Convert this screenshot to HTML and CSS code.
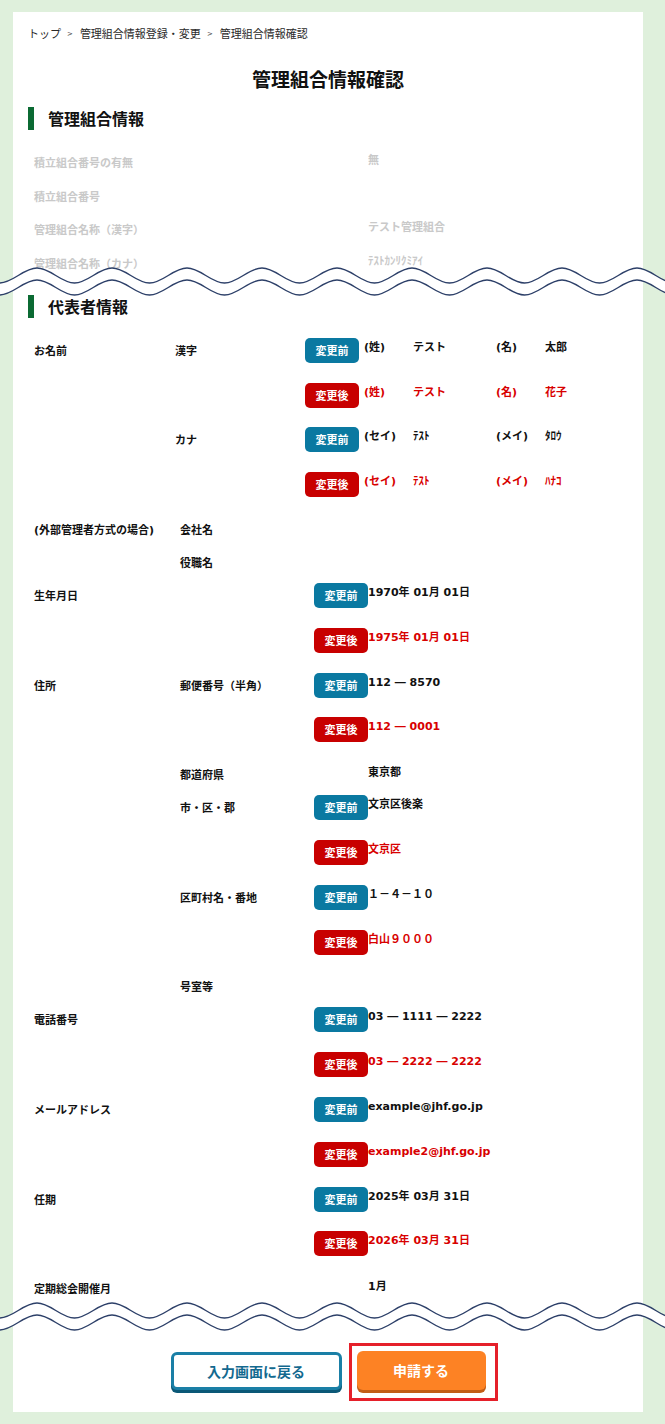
FILE: index.html
```html
<!DOCTYPE html>
<html lang="ja">
<head>
<meta charset="utf-8">
<title>管理組合情報確認</title>
<link rel="stylesheet" href="styles.css">
</head>
<body>
<div class="page">
  <div class="card">
    <nav class="crumb"><span>トップ</span><span class="sep">&gt;</span><span>管理組合情報登録・変更</span><span class="sep">&gt;</span><span>管理組合情報確認</span></nav>
    <h1 class="title">管理組合情報確認</h1>
    <h2 class="sec">管理組合情報</h2>
    <div class="faded">
      <div class="frow"><div class="flb">積立組合番号の有無</div><div class="v">無</div></div>
      <div class="frow"><div class="flb">積立組合番号</div><div class="v"></div></div>
      <div class="frow"><div class="flb">管理組合名称（漢字）</div><div class="v">テスト管理組合</div></div>
      <div class="frow"><div class="flb">管理組合名称（カナ）</div><div class="v">ﾃｽﾄｶﾝﾘｸﾐｱｲ</div></div>
    </div>
    <div class="wave">
      <svg width="665" height="30" viewBox="0 0 665 30">
        <path class="band" d="M-38 1 C-24.5 1 -14 16 -0.5 16 S23.5 1 37 1 S61 16 74.5 16 S98.5 1 112 1 S136 16 149.5 16 S173.5 1 187 1 S211 16 224.5 16 S248.5 1 262 1 S286 16 299.5 16 S323.5 1 337 1 S361 16 374.5 16 S398.5 1 412 1 S436 16 449.5 16 S473.5 1 487 1 S511 16 524.5 16 S548.5 1 562 1 S586 16 599.5 16 S623.5 1 637 1 S661 16 674.5 16 S698.5 1 712 1 L712 13 C698.5 13 688 28 674.5 28 S650.5 13 637 13 S613 28 599.5 28 S575.5 13 562 13 S538 28 524.5 28 S500.5 13 487 13 S463 28 449.5 28 S425.5 13 412 13 S388 28 374.5 28 S350.5 13 337 13 S313 28 299.5 28 S275.5 13 262 13 S238 28 224.5 28 S200.5 13 187 13 S163 28 149.5 28 S125.5 13 112 13 S88 28 74.5 28 S50.5 13 37 13 S13 28 -0.5 28 S-24.5 13 -38 13 Z"/>
        <path class="line" d="M-38 1 C-24.5 1 -14 16 -0.5 16 S23.5 1 37 1 S61 16 74.5 16 S98.5 1 112 1 S136 16 149.5 16 S173.5 1 187 1 S211 16 224.5 16 S248.5 1 262 1 S286 16 299.5 16 S323.5 1 337 1 S361 16 374.5 16 S398.5 1 412 1 S436 16 449.5 16 S473.5 1 487 1 S511 16 524.5 16 S548.5 1 562 1 S586 16 599.5 16 S623.5 1 637 1 S661 16 674.5 16 S698.5 1 712 1"/>
        <path class="line" transform="translate(0 12)" d="M-38 1 C-24.5 1 -14 16 -0.5 16 S23.5 1 37 1 S61 16 74.5 16 S98.5 1 112 1 S136 16 149.5 16 S173.5 1 187 1 S211 16 224.5 16 S248.5 1 262 1 S286 16 299.5 16 S323.5 1 337 1 S361 16 374.5 16 S398.5 1 412 1 S436 16 449.5 16 S473.5 1 487 1 S511 16 524.5 16 S548.5 1 562 1 S586 16 599.5 16 S623.5 1 637 1 S661 16 674.5 16 S698.5 1 712 1"/>
      </svg>
    </div>
    <h2 class="sec sec2">代表者情報</h2>

    <div class="names">
      <div class="nl"><div class="lb">お名前</div><div class="lb">漢字</div><div><div class="badge before">変更前</div></div><div class="v">(姓)</div><div class="v">テスト</div><div class="v">(名)</div><div class="v">太郎</div></div>
      <div class="nl red"><div></div><div></div><div><div class="badge after">変更後</div></div><div class="v">(姓)</div><div class="v">テスト</div><div class="v">(名)</div><div class="v">花子</div></div>
      <div class="nl"><div></div><div class="lb">カナ</div><div><div class="badge before">変更前</div></div><div class="v">(セイ)</div><div class="v">ﾃｽﾄ</div><div class="v">(メイ)</div><div class="v">ﾀﾛｳ</div></div>
      <div class="nl red"><div></div><div></div><div><div class="badge after">変更後</div></div><div class="v">(セイ)</div><div class="v">ﾃｽﾄ</div><div class="v">(メイ)</div><div class="v">ﾊﾅｺ</div></div>
    </div>

    <div class="tbl">
      <div class="tl t"><div class="lb">(外部管理者方式の場合)</div><div class="lb">会社名</div><div></div><div class="v"></div></div>
      <div class="tl t"><div></div><div class="lb">役職名</div><div></div><div class="v"></div></div>
      <div class="tl"><div class="lb">生年月日</div><div></div><div class="badge before">変更前</div><div class="v">1970年 01月 01日</div></div>
      <div class="tl red"><div></div><div></div><div class="badge after">変更後</div><div class="v">1975年 01月 01日</div></div>
      <div class="tl"><div class="lb">住所</div><div class="lb">郵便番号（半角）</div><div class="badge before">変更前</div><div class="v">112 ― 8570</div></div>
      <div class="tl red"><div></div><div></div><div class="badge after">変更後</div><div class="v">112 ― 0001</div></div>
      <div class="tl t"><div></div><div class="lb">都道府県</div><div></div><div class="v">東京都</div></div>
      <div class="tl"><div></div><div class="lb">市・区・郡</div><div class="badge before">変更前</div><div class="v">文京区後楽</div></div>
      <div class="tl red"><div></div><div></div><div class="badge after">変更後</div><div class="v">文京区</div></div>
      <div class="tl"><div></div><div class="lb">区町村名・番地</div><div class="badge before">変更前</div><div class="v">１－４－１０</div></div>
      <div class="tl red"><div></div><div></div><div class="badge after">変更後</div><div class="v">白山９０００</div></div>
      <div class="tl t"><div></div><div class="lb">号室等</div><div></div><div class="v"></div></div>
      <div class="tl"><div class="lb">電話番号</div><div></div><div class="badge before">変更前</div><div class="v">03 ― 1111 ― 2222</div></div>
      <div class="tl red"><div></div><div></div><div class="badge after">変更後</div><div class="v">03 ― 2222 ― 2222</div></div>
      <div class="tl"><div class="lb">メールアドレス</div><div></div><div class="badge before">変更前</div><div class="v">example@jhf.go.jp</div></div>
      <div class="tl red"><div></div><div></div><div class="badge after">変更後</div><div class="v">example2@jhf.go.jp</div></div>
      <div class="tl"><div class="lb">任期</div><div></div><div class="badge before">変更前</div><div class="v">2025年 03月 31日</div></div>
      <div class="tl red"><div></div><div></div><div class="badge after">変更後</div><div class="v">2026年 03月 31日</div></div>
      <div class="tl t"><div class="lb">定期総会開催月</div><div></div><div></div><div class="v">1月</div></div>
    </div>

    <div class="wave wave2">
      <svg width="665" height="30" viewBox="0 0 665 30">
        <path class="band" d="M-38 1 C-24.5 1 -14 16 -0.5 16 S23.5 1 37 1 S61 16 74.5 16 S98.5 1 112 1 S136 16 149.5 16 S173.5 1 187 1 S211 16 224.5 16 S248.5 1 262 1 S286 16 299.5 16 S323.5 1 337 1 S361 16 374.5 16 S398.5 1 412 1 S436 16 449.5 16 S473.5 1 487 1 S511 16 524.5 16 S548.5 1 562 1 S586 16 599.5 16 S623.5 1 637 1 S661 16 674.5 16 S698.5 1 712 1 L712 13 C698.5 13 688 28 674.5 28 S650.5 13 637 13 S613 28 599.5 28 S575.5 13 562 13 S538 28 524.5 28 S500.5 13 487 13 S463 28 449.5 28 S425.5 13 412 13 S388 28 374.5 28 S350.5 13 337 13 S313 28 299.5 28 S275.5 13 262 13 S238 28 224.5 28 S200.5 13 187 13 S163 28 149.5 28 S125.5 13 112 13 S88 28 74.5 28 S50.5 13 37 13 S13 28 -0.5 28 S-24.5 13 -38 13 Z"/>
        <path class="line" d="M-38 1 C-24.5 1 -14 16 -0.5 16 S23.5 1 37 1 S61 16 74.5 16 S98.5 1 112 1 S136 16 149.5 16 S173.5 1 187 1 S211 16 224.5 16 S248.5 1 262 1 S286 16 299.5 16 S323.5 1 337 1 S361 16 374.5 16 S398.5 1 412 1 S436 16 449.5 16 S473.5 1 487 1 S511 16 524.5 16 S548.5 1 562 1 S586 16 599.5 16 S623.5 1 637 1 S661 16 674.5 16 S698.5 1 712 1"/>
        <path class="line" transform="translate(0 12)" d="M-38 1 C-24.5 1 -14 16 -0.5 16 S23.5 1 37 1 S61 16 74.5 16 S98.5 1 112 1 S136 16 149.5 16 S173.5 1 187 1 S211 16 224.5 16 S248.5 1 262 1 S286 16 299.5 16 S323.5 1 337 1 S361 16 374.5 16 S398.5 1 412 1 S436 16 449.5 16 S473.5 1 487 1 S511 16 524.5 16 S548.5 1 562 1 S586 16 599.5 16 S623.5 1 637 1 S661 16 674.5 16 S698.5 1 712 1"/>
      </svg>
    </div>

    <div class="btns">
      <div class="btn back">入力画面に戻る</div>
      <div class="btn apply">申請する</div>
    </div>
  </div>
</div>
</body>
</html>
```

FILE: styles.css
```css
* { box-sizing: border-box; }

html, body {
  margin: 0;
  background: #dff0dc;
}

body {
  font-family: "DejaVu Sans", "Noto Sans CJK JP", sans-serif;
  color: #111;
}

.page {
  padding: 12px 0 12px 13px;
}

.card {
  width: 630px;
  background: #fff;
  padding: 11px 0 22px;
}

.crumb {
  display: flex;
  align-items: center;
  height: 20px;
  padding-left: 15px;
  font-family: "Noto Sans CJK JP", sans-serif;
  font-size: 11px;
  line-height: 20px;
  color: #2a2a2a;
}

.crumb .sep {
  font-family: "DejaVu Sans", sans-serif;
  font-size: 7px;
  margin: 2px 7px 0 6px;
  color: #444;
}

.title {
  margin: 21px 0 0;
  text-align: center;
  font-family: "Noto Sans CJK JP", sans-serif;
  font-size: 19px;
  line-height: 30px;
  font-weight: 700;
}

.sec {
  display: flex;
  align-items: center;
  gap: 14px;
  height: 23px;
  margin: 13px 0 0 15px;
  font-family: "Noto Sans CJK JP", sans-serif;
  font-size: 16px;
  line-height: 23px;
  font-weight: 700;
}

.sec::before {
  content: "";
  width: 6px;
  height: 23px;
  background: #0b6a33;
}

.sec2 { margin-top: -2px; }

.faded {
  margin-top: 20px;
  padding-left: 21px;
  color: #c9c9c9;
  font-size: 11px;
  font-weight: 700;
}

.frow {
  display: grid;
  grid-template-columns: 334px 1fr;
  height: 33.7px;
}

.frow .flb { line-height: 28px; }
.frow .v { line-height: 22px; }

.wave {
  position: relative;
  width: 665px;
  height: 30px;
  margin: -18px 0 0 -13px;
}

.wave svg { display: block; }

.wave .band { fill: #fff; }

.wave .line {
  fill: none;
  stroke: #2c3f68;
  stroke-width: 1.4;
}

.wave2 { margin-top: -7px; }

.names,
.tbl {
  padding-left: 21px;
  font-size: 11px;
  font-weight: 700;
}

.names { margin-top: 20px; }

.nl {
  display: grid;
  grid-template-columns: 141px 130px 59px 49px 83px 49px 1fr;
  align-items: start;
  height: 44.8px;
}

.tl {
  display: grid;
  grid-template-columns: 146px 134px 54px 1fr;
  align-items: start;
  height: 44.8px;
}

.tl.t { height: 33px; }

.lb {
  line-height: 28px;
  color: #111;
}

.v { line-height: 20px; }
.t .v { line-height: 22px; }

.red .v { color: #d80000; }

.badge {
  width: 54px;
  height: 25px;
  border-radius: 5px;
  color: #fff;
  font-family: "Noto Sans CJK JP", sans-serif;
  font-size: 11px;
  line-height: 25px;
  text-align: center;
}

.before { background: #0a79a1; }
.after { background: #c80000; }

.btns {
  display: flex;
  justify-content: center;
  align-items: flex-start;
  gap: 15px;
  margin-top: 18.6px;
}

.btn {
  display: flex;
  align-items: center;
  justify-content: center;
  border-radius: 6px;
  font-family: "Noto Sans CJK JP", sans-serif;
  font-size: 14px;
  font-weight: 700;
}

.back {
  width: 171px;
  height: 38px;
  margin-top: 1px;
  background: #fff;
  border: 3px solid #1a7fa6;
  color: #13698f;
  box-shadow: 0 3px 0 #0b5877;
}

.apply {
  position: relative;
  width: 129px;
  height: 39px;
  background: #fd8224;
  color: #fff;
  box-shadow: 0 3px 0 #c25d16;
}

.apply::after {
  content: "";
  position: absolute;
  top: -8px;
  left: -8px;
  right: -12px;
  bottom: -11px;
  border: 3px solid #e5202a;
}
```
